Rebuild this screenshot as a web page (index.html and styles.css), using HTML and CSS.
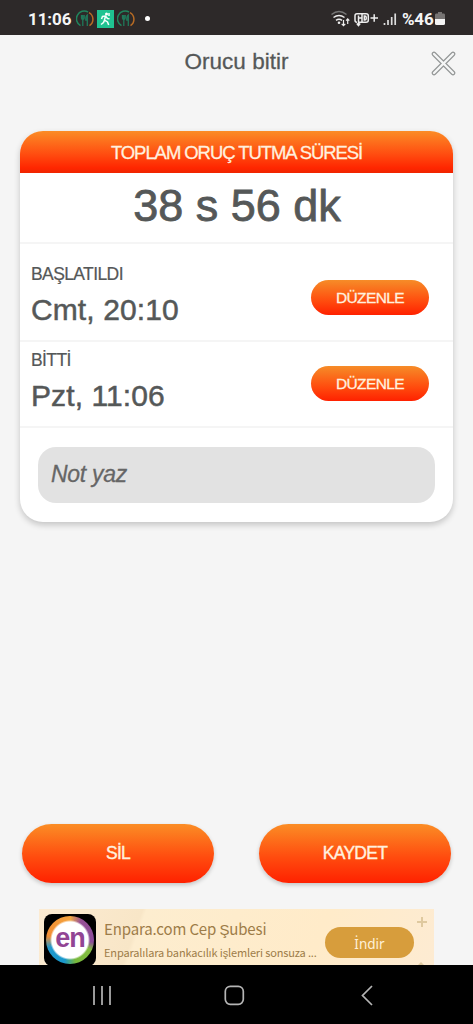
FILE: index.html
```html
<!DOCTYPE html>
<html lang="tr">
<head>
<meta charset="utf-8">
<title>Orucu bitir</title>
<link rel="stylesheet" href="styles.css">
</head>
<body>
<div class="screen">
  <header class="status">
    <span class="clock">11:06</span>
    <svg class="fast" width="18" height="18" viewBox="0 0 18 18" fill="none" stroke-width="1.5"><path d="M4.5 15.6A7.6 7.6 0 0 1 12 2" stroke="#20855d"/><path d="M13 2.6A7.6 7.6 0 0 1 13.5 15.6" stroke="#b76b24"/><path d="M5.5 5v3q0 1.5 1.3 1.5T8.2 8V5M6.8 5v11M11.3 16V5q-1.700 1-1.500 5h1.500" stroke="#20785a" stroke-width="1.300"/></svg>
    <svg class="walk" width="17" height="18" viewBox="0 0 17 18"><path fill="#1fc391" d="M0 0h17v18H0z"/><circle cx="9.500" cy="4" r="1.500" fill="#fff"/><path d="M8.500 6.200 7.500 10l3 2 1.200 3M7.500 10 6.500 12.500 4 14.500M4.500 9l1-2.500 3-.5 2 2.500 2 .3M12 3v3" fill="none" stroke="#f2fffb" stroke-width="1.500"/></svg>
    <svg class="fast" width="18" height="18" viewBox="0 0 18 18" fill="none" stroke-width="1.500"><path d="M4.500 15.600A7.600 7.600 0 0 1 12 2" stroke="#20855d"/><path d="M13 2.600A7.600 7.600 0 0 1 13.500 15.600" stroke="#b76b24"/><path d="M5.500 5v3q0 1.500 1.300 1.500T8.200 8V5M6.800 5v11M11.300 16V5q-1.700 1-1.500 5h1.500" stroke="#20785a" stroke-width="1.300"/></svg>
    <i class="dot"></i>
    <svg class="signals" width="72" height="20" viewBox="0 0 72 20" fill="none" stroke="#eee" stroke-width="1.500"><path d="M1.500 5.500q7.500-6 15 0" stroke="#777"/><path d="M3.500 8.500q5.500-4 11 0M6 11.300q3-2.200 6 0"/><circle cx="9" cy="13.800" r="1.300" fill="#eee" stroke="none"/><path d="M13.500 11v5.500m-1.800-1.700 1.800 1.800 1.800-1.800M17.700 15V10m-1.600 1.700 1.600-1.700 1.600 1.700" stroke-width="1.200"/><path d="M29 13.300h7q2.300 0 2.300-2V6.800q0-2-2.300-2H27q-2 0-2 2v4.500q0 2 2 2M28.500 6.500v9.500M32 4.800v8.500M28.500 9H32M34.300 7v4h.7q1.200 0 1.200-1.200V8.200Q36.200 7 35 7zM26.800 14.500l1.700 2 1.700-2M40.500 9h7.500M44.200 5.300v7.500"/><path d="M54.500 16v-2M58 16v-5M61.700 16V8M65.200 16V4.500" stroke="#ddd" stroke-width="1.700"/></svg>
    <span class="percent">%46</span>
    <svg class="battery" width="10" height="14" viewBox="0 0 10 14"><path d="M3 0h4v1.500h2Q10 1.500 10 3v4H0V3Q0 1.500 1 1.500h2z" fill="#777473"/><path d="M0 7h10v4.500Q10 13 8.500 13h-7Q0 13 0 11.500z" fill="#f4f4f4"/></svg>
  </header>

  <div class="titlebar">
    <h1 class="title">Orucu bitir</h1>
    <svg class="close" width="25" height="25" viewBox="0 0 25 25" fill="none" stroke-linecap="round"><path d="m3 3 19 19M22 3 3 22" stroke="#929595" stroke-width="4.600"/><path d="m3 3 19 19M22 3 3 22" stroke="#f5f6f6" stroke-width="2.400"/></svg>
  </div>

  <main class="card">
    <h2 class="card-head">TOPLAM ORUÇ TUTMA SÜRESİ</h2>
    <div class="total">38 s 56 dk</div>
    <section class="row row-start">
      <div><div class="label">BAŞLATILDI</div><div class="value">Cmt, 20:10</div></div>
      <button class="edit">DÜZENLE</button>
    </section>
    <section class="row row-end">
      <div><div class="label">BİTTİ</div><div class="value">Pzt, 11:06</div></div>
      <button class="edit">DÜZENLE</button>
    </section>
    <div class="note">Not yaz</div>
  </main>

  <div class="actions">
    <button class="action">SİL</button>
    <button class="action">KAYDET</button>
  </div>

  <aside class="ad">
    <div class="ad-logo"><span class="ad-disc">en</span></div>
    <div class="ad-copy">
      <div class="ad-title">Enpara.com Cep Şubesi</div>
      <div class="ad-text">Enparalılara bankacılık işlemleri sonsuza ...</div>
    </div>
    <span class="ad-button">İndir</span>
    <svg class="spark" width="12" height="56" viewBox="0 0 12 56"><path d="M6 8v10M1 13h10" stroke="#dfc99f" stroke-width="2"/><path d="m2 56 3-3 3 3" fill="#dfc99f"/></svg>
  </aside>

  <nav class="navbar">
    <svg width="473" height="59" viewBox="0 0 473 59" fill="none" stroke="#b5b5b5" stroke-width="1.700"><path d="M94 21v19M102 21v19M110 21v19"/><rect x="225.300" y="21.300" width="18" height="18" rx="5"/><path d="m372 21-9.500 9.500L372 40"/></svg>
  </nav>
</div>
</body>
</html>
```
FILE: styles.css
```css
* { box-sizing: border-box; }
body { margin: 0; font-family: "Liberation Sans", Arial, sans-serif; color: #555858; }
h1, h2 { margin: 0; font-weight: 400; }
button { border: 0; padding: 0; font-family: inherit; color: #fff0df; }
.screen { width: 473px; height: 1024px; display: flex; flex-direction: column; background: #f5f5f5; overflow: hidden; }
.status { height: 35px; flex: none; display: flex; align-items: center; padding: 2px 28px 0 28px; background: #2d2929; color: #f5f5f5; font: 700 17px/20px Roboto, sans-serif; }
.clock { width: 48px; letter-spacing: -.1px; }
.walk { margin: 0 3px; }
.dot { width: 5px; height: 5px; margin-left: 10px; border-radius: 50%; background: #fff; }
.signals { margin-left: auto; }
.percent { width: 33px; letter-spacing: -.2px; }
.titlebar { height: 96px; flex: none; display: grid; grid-template-columns: 40px 1fr 40px; padding-top: 13px; }
.title { grid-column: 2; font-size: 22.500px; line-height: 28px; text-align: center; -webkit-text-stroke: .3px #555858; }
.close { margin: 3px 0 0 -2px; }
.card { width: 433px; height: 391px; flex: none; margin-left: 20px; border-radius: 23px; background: #fff; box-shadow: 0 3px 6px rgba(0,0,0,.2); }
.card-head { height: 42px; border-radius: 23px 23px 0 0; background: linear-gradient(#fb8c26, #ff4d10 55%, #ff2600 88%, #ef2500); color: #fff0df; font-size: 18.500px; line-height: 43px; letter-spacing: -1.070px; text-align: center; -webkit-text-stroke: .3px #fff0df; }
.total { height: 71px; border-bottom: 2px solid #f5f5f5; font-size: 45px; line-height: 65px; text-align: center; text-indent: 1px; -webkit-text-stroke: .8px #555858; }
.row { display: flex; justify-content: space-between; padding: 0 24px 0 11px; border-bottom: 2px solid #f5f5f5; }
.row-start { height: 98px; padding-top: 19px; }
.row-end { height: 86px; padding-top: 7px; }
.label { font-size: 17.500px; line-height: 22px; letter-spacing: -.6px; -webkit-text-stroke: .2px #555858; }
.value { font-size: 30px; line-height: 34px; margin-top: 8px; letter-spacing: .1px; -webkit-text-stroke: .5px #555858; }
.edit { width: 118px; height: 35px; margin-top: 17px; border-radius: 18px; background: linear-gradient(#f68c28, #ff4c0e 60%, #ff2100); font-size: 15.500px; letter-spacing: -.600px; -webkit-text-stroke: .3px #fff0df; }
.note { height: 56px; margin: 19px 18px 0; padding-left: 13px; border-radius: 18px; background: #e2e2e2; color: #666; font-size: 23px; font-style: italic; line-height: 54px; letter-spacing: -.3px; -webkit-text-stroke: .3px #666; }
.actions { display: flex; flex: none; gap: 45px; margin: 302px 22px 0; }
.action { width: 192px; height: 59px; border-radius: 30px; background: linear-gradient(#fb8d25, #ff4d0f 55%, #ff2100); box-shadow: 0 2px 4px rgba(0,0,0,.2); font-size: 17.500px; letter-spacing: -.7px; -webkit-text-stroke: .4px #fff0df; }
.ad { height: 56px; flex: none; display: flex; margin: 26px 39px 0; padding: 5px 0 0 5px; background: linear-gradient(110deg, #fcebd2, #f8e6c7 25%, #fdedcf 26%, #ffebc9 70%, #fdebd2); font-family: "Noto Sans CJK SC", sans-serif; overflow: hidden; }
.ad-logo { width: 52px; height: 52px; flex: none; padding: 2px; border-radius: 8px; background: #000; }
.ad-disc { display: block; width: 48px; height: 48px; border-radius: 50%; background: radial-gradient(circle, #fff 18px, transparent 20px), conic-gradient(#f4ad43, #965096 30deg, #8b4d99 95deg, #84bd43 115deg, #78b83b 165deg, #1998cc 195deg, #2098cc 250deg, #f18d34 280deg, #f5a23d); color: #914594; font: 700 27px/45px "Liberation Sans", sans-serif; letter-spacing: -1px; text-align: center; }
.ad-copy { width: 214px; margin-left: 8px; color: #9d7c48; white-space: nowrap; }
.ad-title { padding-top: 4px; font-size: 15px; line-height: 22px; letter-spacing: -.14px; }
.ad-text { padding-top: 4px; font-size: 11px; line-height: 16px; letter-spacing: -.15px; }
.ad-button { width: 89px; height: 31px; margin: 13px 0 0 7px; border-radius: 16px; background: #d79d3c; color: #fff1d8; font: 13.500px/34px "Noto Sans", sans-serif; text-align: center; }
.spark { margin: -5px 0 0 2px; }
.navbar { height: 59px; flex: none; background: #000; }
.navbar svg { display: block; }
```
